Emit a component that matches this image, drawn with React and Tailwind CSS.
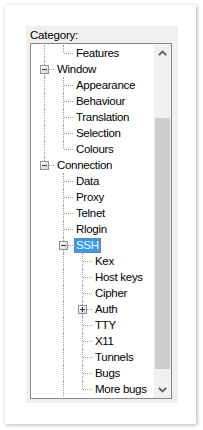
import React from "react";

// Rows of the visible tree. anc = for each ancestor column, whether its vertical guide continues.
const rows = [
  { label: "Features", level: 1, last: true, anc: [true] },
  { label: "Window", level: 0, last: false, anc: [], toggle: "minus" },
  { label: "Appearance", level: 1, last: false, anc: [true] },
  { label: "Behaviour", level: 1, last: false, anc: [true] },
  { label: "Translation", level: 1, last: false, anc: [true] },
  { label: "Selection", level: 1, last: false, anc: [true] },
  { label: "Colours", level: 1, last: true, anc: [true] },
  { label: "Connection", level: 0, last: true, anc: [], toggle: "minus" },
  { label: "Data", level: 1, last: false, anc: [false] },
  { label: "Proxy", level: 1, last: false, anc: [false] },
  { label: "Telnet", level: 1, last: false, anc: [false] },
  { label: "Rlogin", level: 1, last: false, anc: [false] },
  { label: "SSH", level: 1, last: false, anc: [false], toggle: "minus", selected: true },
  { label: "Kex", level: 2, last: false, anc: [false, true] },
  { label: "Host keys", level: 2, last: false, anc: [false, true] },
  { label: "Cipher", level: 2, last: false, anc: [false, true] },
  { label: "Auth", level: 2, last: false, anc: [false, true], toggle: "plus" },
  { label: "TTY", level: 2, last: false, anc: [false, true] },
  { label: "X11", level: 2, last: false, anc: [false, true] },
  { label: "Tunnels", level: 2, last: false, anc: [false, true] },
  { label: "Bugs", level: 2, last: false, anc: [false, true] },
  { label: "More bugs", level: 2, last: true, anc: [false, true] },
];

function Toggle({ kind }) {
  return (
    <svg width="9" height="9" viewBox="0 0 9 9" className="absolute left-[5px] top-[4px]">
      <defs>
        <linearGradient id="tg" x1="0" y1="0" x2="1" y2="1">
          <stop offset="0" stopColor="#ffffff" />
          <stop offset="1" stopColor="#d4d4d4" />
        </linearGradient>
      </defs>
      <rect x="0.5" y="0.5" width="8" height="8" fill="url(#tg)" stroke="#919191" />
      <rect x="2" y="4" width="5" height="1" fill="#1f3b6e" />
      {kind === "plus" && <rect x="4" y="2" width="1" height="5" fill="#1f3b6e" />}
    </svg>
  );
}

function Row({ row }) {
  return (
    <div className="flex h-4 items-center">
      {row.anc.map((cont, i) => (
        <div key={i} className="relative h-4 w-[19px] shrink-0">
          {cont && <div className="absolute left-[9px] top-0 h-4 border-l border-dotted border-[#a0a0a0]" />}
        </div>
      ))}
      <div className="relative h-4 w-[19px] shrink-0">
        <div
          className={`absolute left-[9px] top-0 border-l border-dotted border-[#a0a0a0] ${row.last ? "h-2" : "h-4"}`}
        />
        <div className="absolute left-[10px] top-[8px] w-[9px] border-t border-dotted border-[#a0a0a0]" />
        {row.toggle && <Toggle kind={row.toggle} />}
      </div>
      <div
        className={`ml-px px-px h-[15px] leading-[13px] whitespace-nowrap border border-dotted ${
          row.selected ? "bg-[#3399ff] text-white border-[#c07020]" : "border-transparent text-black"
        }`}
      >
        {row.label}
      </div>
    </div>
  );
}

function Chevron({ up }) {
  return (
    <svg width="9" height="6" viewBox="0 0 9 6">
      <path
        d={up ? "M0.8 5.2 L4.5 1.5 L8.2 5.2" : "M0.8 0.8 L4.5 4.5 L8.2 0.8"}
        fill="none"
        stroke="#606060"
        strokeWidth="1.8"
      />
    </svg>
  );
}

export default function App() {
  return (
    <div
      className="w-[203px] h-[430px] bg-white p-[5px] pr-[7px] pb-[6px] text-[11.5px]"
      style={{ fontFamily: '"Liberation Sans", Arial, sans-serif' }}
    >
      <div className="h-full w-full bg-white shadow-[1px_1px_4px_rgba(0,0,0,0.3)] pt-[21px] pl-[21px] pr-[18px]">
        <div className="h-[377px] bg-[#f0f0f0] pl-[4px] pr-[6px]">
          <div className="h-[17px] pt-[2px] leading-[14px] text-black tracking-[-0.2px]">Category:</div>
          <div className="flex h-[356px] border border-[#828790] bg-white">
            <div className="flex-1 overflow-hidden pt-px pl-[4px] tracking-[-0.3px]">
              {rows.map((r) => (
                <Row key={r.label} row={r} />
              ))}
            </div>
            <div className="flex w-[17px] flex-col bg-[#f0f0f0]">
              <div className="flex h-[17px] items-center justify-center">
                <Chevron up />
              </div>
              <div className="flex-1 px-px pt-[57px] pb-[12px]">
                <div className="h-full bg-[#cdcdcd]" />
              </div>
              <div className="flex h-[17px] items-center justify-center">
                <Chevron />
              </div>
            </div>
          </div>
        </div>
      </div>
    </div>
  );
}
